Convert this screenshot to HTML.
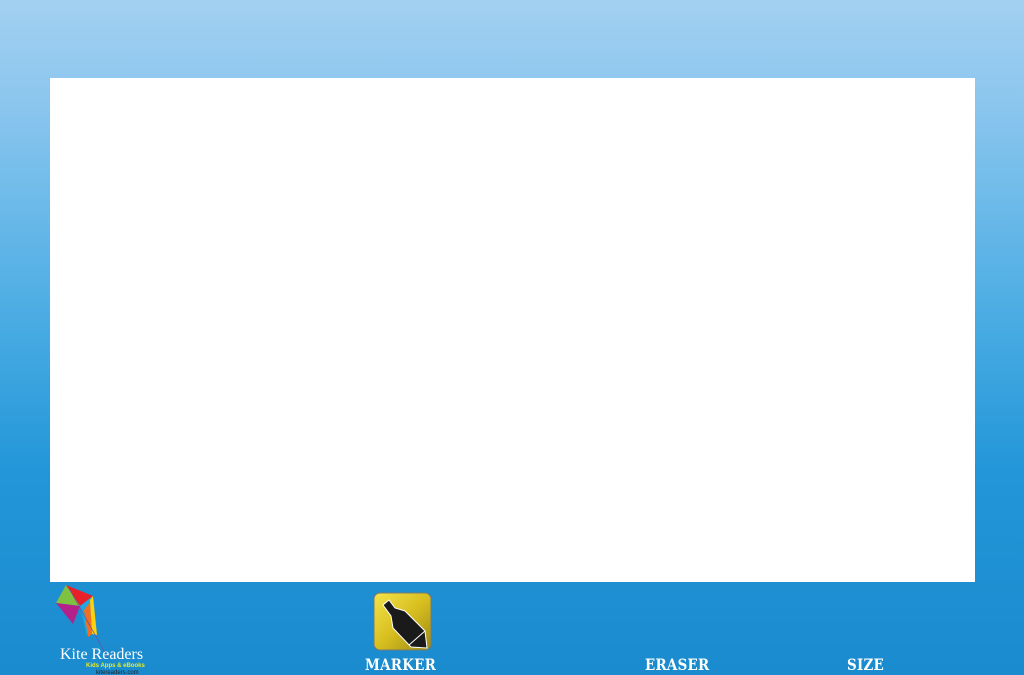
<!DOCTYPE html>
<html><head><meta charset="utf-8"><style>
html,body{margin:0;padding:0}
body{width:1024px;height:675px;overflow:hidden;position:relative;background:linear-gradient(to bottom,#a2d0f1 0%,#8cc6ee 15%,#4eaee4 45%,#2296d8 70%,#1a8bce 100%);font-family:"Liberation Serif",serif}
.panel{position:absolute;left:50px;top:78px;width:925px;height:504px;background:#fff}
.lbl{position:absolute;top:655px;color:#fff;font-weight:bold;font-size:16px;letter-spacing:0.3px;font-family:"DejaVu Serif","Liberation Serif",serif;transform:scaleX(0.84);transform-origin:left;white-space:nowrap}
</style></head><body>
<div class="panel"></div>
<svg style="position:absolute;left:50px;top:580px" width="100" height="95">
<polygon points="16,5 43,16 30,26" fill="#e8202a"/>
<polygon points="16,5 30,26 6,23" fill="#7fc241"/>
<polygon points="6,23 30,26 23,44" fill="#b4218b"/>
<polygon points="30,26 43,16 37,56" fill="#1fa9e1"/>
<polygon points="34,30 40,22 42,54 38,57" fill="#f26f21"/>
<polygon points="40,20 43,16 47,55 42,54" fill="#fdd10b"/>
<line x1="20" y1="10" x2="58" y2="78" stroke="#6a4fa0" stroke-width="0.7"/>
<text x="10" y="79" fill="#fff" font-family="Liberation Serif" font-size="16">Kite Readers</text>
<text x="36" y="87" fill="#e6ec2a" font-family="Liberation Sans" font-size="6" font-weight="bold">Kids Apps &amp; eBooks</text>
<text x="46" y="94" fill="#222" font-family="Liberation Sans" font-size="6">kitereaders.com</text>
</svg>
<svg style="position:absolute;left:373px;top:592px" width="60" height="60">
<defs><linearGradient id="g" x1="0" y1="0" x2="1" y2="1"><stop offset="0" stop-color="#f3e34a"/><stop offset="0.5" stop-color="#d8bf20"/><stop offset="1" stop-color="#9a8a14"/></linearGradient></defs>
<rect x="1" y="1" width="57" height="57" rx="6" fill="url(#g)" stroke="#7a7a6a" stroke-width="1"/>
<path d="M10,13 L16,8 L22,16 L32,19 L52,39 L54,56 L38,55 L20,36 L18,24 Z" fill="#1a1a1a" stroke="#fff" stroke-width="1"/>
<line x1="52" y1="39" x2="36" y2="53" stroke="#fff" stroke-width="1"/>
</svg>
<div class="lbl" style="left:365px">MARKER</div>
<div class="lbl" style="left:645px">ERASER</div>
<div class="lbl" style="left:847px">SIZE</div>
</body></html>
